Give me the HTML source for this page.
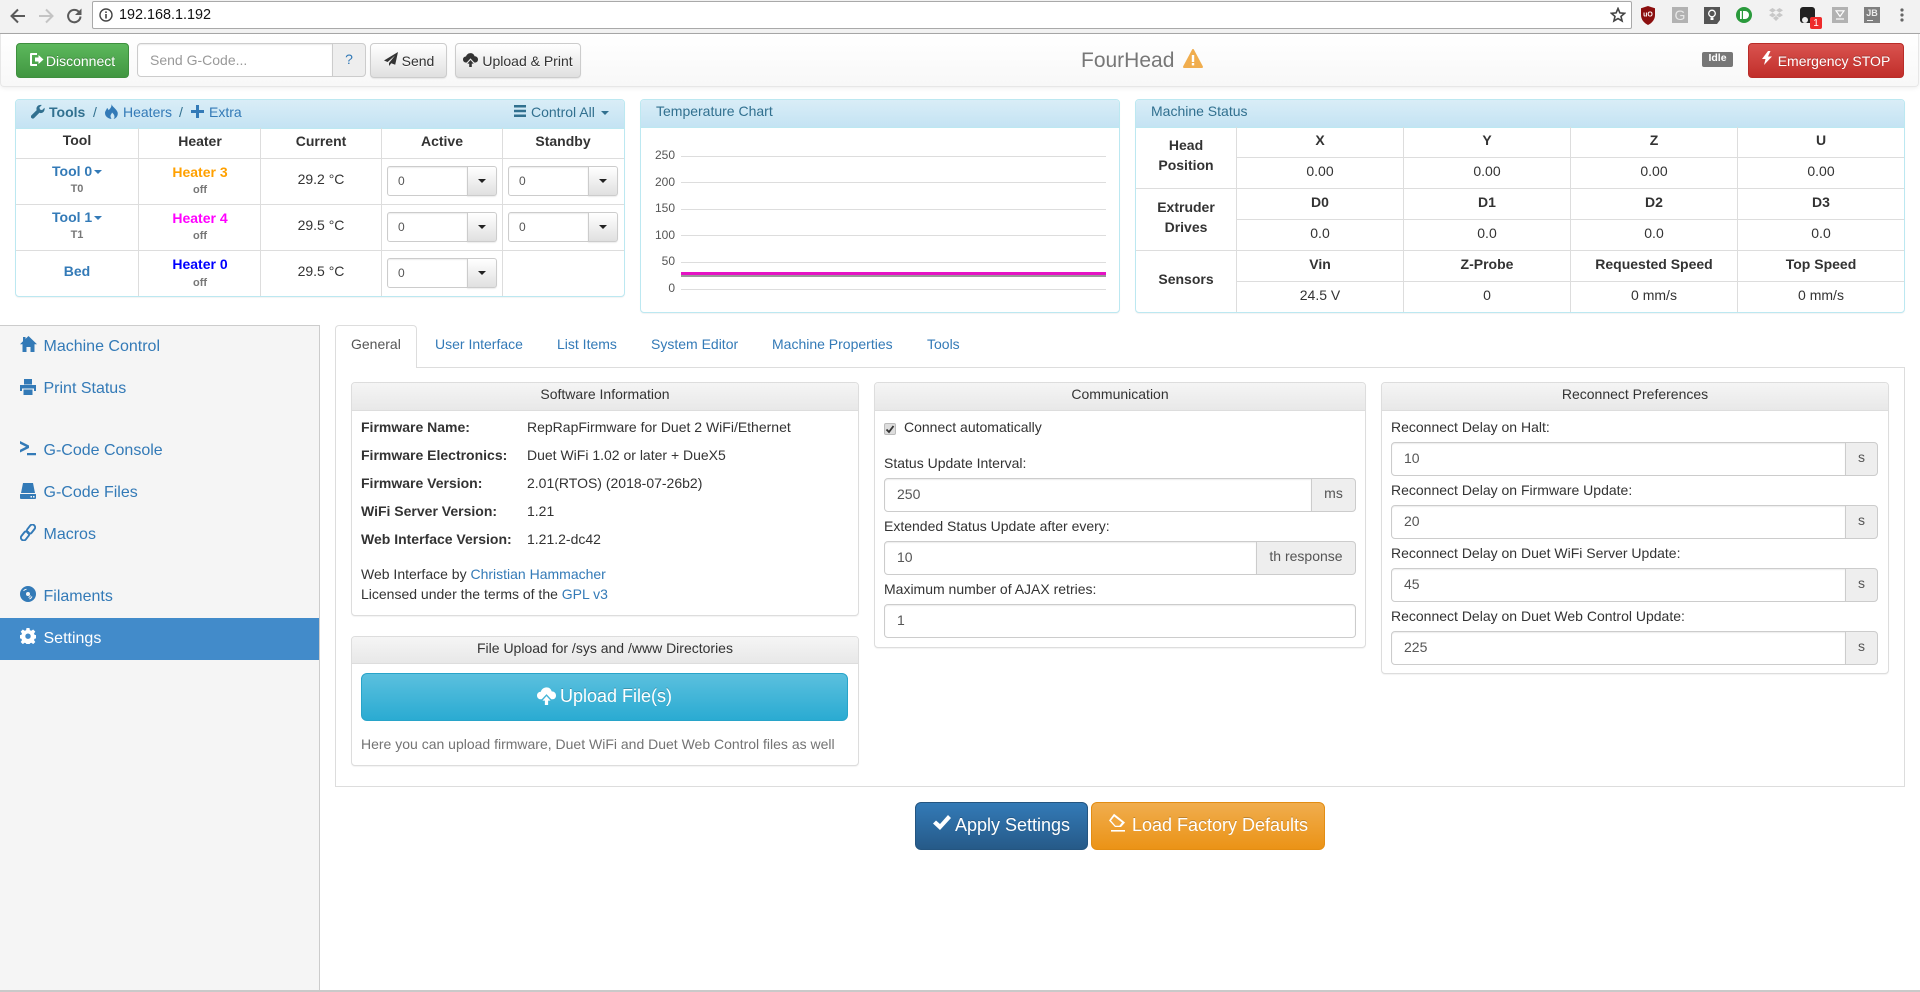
<!DOCTYPE html>
<html><head><meta charset="utf-8"><title>FourHead</title>
<style>
*{box-sizing:border-box}
html,body{margin:0;padding:0;width:1920px;height:992px;overflow:hidden;background:#fff;font:14px/20px "Liberation Sans",sans-serif;color:#333}
.a{position:absolute}
.t{position:absolute;white-space:nowrap;line-height:20px}
.c{transform:translateX(-50%)}
.b{font-weight:bold}
a,.l{color:#337ab7;text-decoration:none}
svg{position:absolute;display:block}
.btn{position:absolute;border:1px solid #ccc;border-radius:4px;white-space:nowrap;line-height:20px;text-align:center}
.def{background:linear-gradient(#fff,#e0e0e0);border-color:#ccc;text-shadow:0 1px 0 #fff;box-shadow:inset 0 1px 0 rgba(255,255,255,.15),0 1px 1px rgba(0,0,0,.075)}
.panel{position:absolute;background:#fff;border:1px solid #ddd;border-radius:4px;box-shadow:0 1px 1px rgba(0,0,0,.05)}
.ph{position:absolute;left:0;right:0;top:0;background:linear-gradient(#f5f5f5,#e8e8e8);border-bottom:1px solid #ddd;border-radius:3px 3px 0 0;text-align:center;height:27px;line-height:20px;padding-top:2px}
.info{border-color:#bce8f1}
.info .ph{background:linear-gradient(#d9edf7,#c4e3f3);border-bottom-color:#bce8f1;color:#31708f;text-align:left}
.h{position:absolute;height:1px;background:#ddd}
.v{position:absolute;width:1px;background:#ddd}
.inp{position:absolute;border:1px solid #ccc;border-radius:4px;background:#fff;color:#555;font:14px "Liberation Sans",sans-serif;padding:0 12px 2px;box-shadow:inset 0 1px 1px rgba(0,0,0,.075);outline:0}
.add{position:absolute;background:#eee;border:1px solid #ccc;border-left-width:1px;border-radius:0 4px 4px 0;color:#555;text-align:center;line-height:28px}
.sel{position:absolute;width:110px;height:30px}
.sel .f{position:absolute;left:0;top:0;width:81px;height:30px;border:1px solid #ccc;border-radius:3px 0 0 3px;background:#fff;color:#555;font-size:12px;line-height:28px;padding-left:10px;box-shadow:inset 0 1px 1px rgba(0,0,0,.075)}
.sel .g{position:absolute;left:80px;top:0;width:30px;height:30px;border:1px solid #ccc;border-radius:0 3px 3px 0;background:linear-gradient(#fff,#e0e0e0);box-shadow:0 1px 1px rgba(0,0,0,.075)}
.caret{position:absolute;width:0;height:0;border-left:4px solid transparent;border-right:4px solid transparent;border-top:4px solid currentColor}
.off{position:absolute;white-space:nowrap;font-size:11px;font-weight:bold;color:#777;line-height:14px;transform:translateX(-50%)}
.nav{position:absolute;left:43.5px;font-size:16px;line-height:22px;color:#337ab7;white-space:nowrap}
</style></head><body>

<!-- browser chrome -->
<div class="a" style="left:0;top:0;width:1920px;height:34px;background:#f2f2f2;border-bottom:1px solid #a9a9a9"></div>
<svg style="left:9px;top:7px" width="18" height="18" viewBox="0 0 18 18"><path d="M16 9H3M9 2.5 2.5 9 9 15.5" fill="none" stroke="#5a5a5a" stroke-width="2"/></svg>
<svg style="left:37px;top:7px" width="18" height="18" viewBox="0 0 18 18"><path d="M2 9h13M9 2.5 15.5 9 9 15.5" fill="none" stroke="#c4c4c4" stroke-width="2"/></svg>
<svg style="left:66px;top:7px" width="17" height="18" viewBox="0 0 17 18"><path d="M14.5 9.500a6.200 6.200 0 1 1-1.700-4.700" fill="none" stroke="#5a5a5a" stroke-width="2"/><path d="M15.500 1.500v6.500H9z" fill="#5a5a5a"/></svg>
<div class="a" style="left:92px;top:1px;width:1540px;height:28px;background:#fff;border:1px solid #a9a9a9;border-radius:2px"></div>
<svg style="left:99px;top:8px" width="14" height="14" viewBox="0 0 14 14"><circle cx="7" cy="7" r="6" fill="none" stroke="#444" stroke-width="1.400"/><rect x="6.200" y="6" width="1.600" height="4.500" fill="#444"/><rect x="6.200" y="3.400" width="1.600" height="1.600" fill="#444"/></svg>
<div class="t" style="left:119px;top:5px;font-size:14.400px;color:#111">192.168.1.192</div>
<svg style="left:1610px;top:7px" width="16" height="16" viewBox="0 0 16 16"><path d="M8 1.500l1.900 4.400 4.700.4-3.600 3.100 1.100 4.600L8 11.600l-4.100 2.400L5 9.400 1.400 6.300l4.700-.4z" fill="none" stroke="#444" stroke-width="1.600"/></svg>
<svg style="left:1640px;top:6px" width="16" height="19" viewBox="0 0 16 19"><path d="M8 0l7 2.300V9c0 4.500-3 8-7 10-4-2-7-5.500-7-10V2.300z" fill="#8b0f0f"/><text x="8" y="10.500" font-size="7" font-weight="bold" text-anchor="middle" fill="#fff" font-family="Liberation Sans">uO</text></svg>
<div class="a" style="left:1672px;top:7px;width:16px;height:16px;background:#b2b2b2;color:#e8e8e8;font-size:14px;line-height:16px;text-align:center">G</div>
<svg style="left:1704px;top:7px" width="16" height="17" viewBox="0 0 16 17"><path d="M0 0h16v13l-3 4H0z" fill="#555"/><circle cx="8" cy="6.500" r="3.300" fill="none" stroke="#fff" stroke-width="1.300"/><path d="M6.500 10.500h3v2.500h-3z" fill="#fff"/></svg>
<svg style="left:1736px;top:7px" width="16" height="16" viewBox="0 0 16 16"><circle cx="8" cy="8" r="8" fill="#2a9a3c"/><rect x="4" y="4" width="1.800" height="8" fill="#fff"/><path d="M7 4h2a4 4 0 0 1 0 8H7z" fill="#fff"/></svg>
<svg style="left:1769px;top:8px" width="14" height="14" viewBox="0 0 14 14" fill="#c8c8c8"><path d="M3.500 0 7 2.300 3.500 4.600 0 2.300zM10.500 0 14 2.300 10.500 4.600 7 2.300zM3.500 4.800 7 7.100 3.500 9.400 0 7.100zM10.500 4.800 14 7.100 10.500 9.400 7 7.100zM7 8l3 2-3 3-3-3z"/></svg>
<div class="a" style="left:1800px;top:7px;width:15px;height:16px;background:#222;border-radius:3px"></div>
<div class="a" style="left:1802px;top:17px;width:6px;height:6px;background:#eee;border-radius:50%"></div>
<div class="a" style="left:1810px;top:17px;width:12px;height:12px;background:#ee2a2a;border-radius:2px;color:#fff;font-size:10px;line-height:13px;text-align:center">1</div>
<div class="a" style="left:1832px;top:7px;width:16px;height:16px;background:#b2b2b2"></div>
<svg style="left:1835px;top:10px" width="10" height="10" viewBox="0 0 10 10"><path d="M1 .8h8L5 6.500z" fill="none" stroke="#fff" stroke-width="1.200"/><path d="M1 9h8" stroke="#fff" stroke-width="1.200"/></svg>
<div class="a" style="left:1864px;top:7px;width:16px;height:16px;background:#7f7f7f;color:#ececec;font-size:9px;font-weight:bold;line-height:12px;text-align:center">JB</div>
<div class="a" style="left:1867px;top:20px;width:6px;height:1px;background:#eee"></div>
<svg style="left:1900px;top:8px" width="4" height="14" viewBox="0 0 4 14" fill="#666"><circle cx="2" cy="2" r="1.600"/><circle cx="2" cy="7" r="1.600"/><circle cx="2" cy="12" r="1.600"/></svg>

<!-- navbar -->
<div class="a" style="left:0;top:34px;width:1919px;height:53px;background:linear-gradient(#fff,#f8f8f8);border:1px solid #e7e7e7;border-top:0;border-radius:0 0 4px 4px;box-shadow:0 1px 5px rgba(0,0,0,.075)"></div>
<div class="btn" style="left:16px;top:43px;width:113px;height:35px;background:linear-gradient(#5cb85c,#419641);border-color:#3e8f3e;color:#fff;padding:7px 0 0 16px;text-shadow:0 -1px 0 rgba(0,0,0,.2)">Disconnect</div>
<svg style="left:29px;top:52px" width="15" height="15" viewBox="0 0 15 15" fill="#fff"><path d="M2 1h6v2H3.500C3 3 3 3.200 3 3.500v8c0 .3 0 .5.5.5H8v2H2a1 1 0 0 1-1-1V2a1 1 0 0 1 1-1z"/><path d="M6 5.500h3.500V3L14.500 7.500 9.500 12V9.500H6z"/></svg>
<div class="inp" style="left:137px;top:43px;width:196px;height:34px;color:#999;line-height:32px;border-radius:4px 0 0 4px">Send G-Code...</div>
<div class="add l" style="left:332px;top:43px;width:34px;height:34px;line-height:30px;border-left:1px solid #ccc"><span style="color:#337ab7">?</span></div>
<div class="btn def" style="left:370px;top:43px;width:77px;height:35px;padding:7px 0 0 19px">Send</div>
<svg style="left:384px;top:52px" width="14" height="14" viewBox="0 0 14 14" fill="#333"><path d="M14 0 0 8.500l3.600 1.500L11 3.500 5 11v3l2.300-2.700 3.900 1.500z"/></svg>
<div class="btn def" style="left:455px;top:43px;width:126px;height:35px;padding:7px 0 0 19px">Upload &amp; Print</div>
<svg style="left:463px;top:52px" width="15" height="15" viewBox="0 0 14 14" fill="#333"><path d="M7 1c2 0 3.400 1.200 3.800 3 1.800 0 3.200 1.200 3.200 3s-1.200 2.800-2.600 2.800H10.500L7 6 3.500 9.800H2.600C1.200 9.800 0 8.600 0 7s1.200-2.800 2.800-2.800C3.300 2.300 5 1 7 1zM7 7.500l3 3.300H8.200V14H5.800v-3.200H4z"/></svg>
<div class="t" style="left:1081px;top:49px;font-size:21px;line-height:24px;color:#777">FourHead</div>
<svg style="left:1183px;top:49px" width="20" height="19" viewBox="0 0 20 19"><path d="M10 0c.5 0 .8.300 1 .7l8.800 16.500c.4.800 0 1.800-1 1.800H1.200c-1 0-1.400-1-1-1.800L9 .7c.2-.4.500-.7 1-.7z" fill="#f0ad4e"/><rect x="8.800" y="6" width="2.400" height="7" fill="#fff"/><rect x="8.800" y="14" width="2.400" height="2.400" fill="#fff"/></svg>
<div class="a b" style="left:1702px;top:52px;width:31px;height:15px;background:#777;border-radius:2px;color:#fff;font-size:10.500px;line-height:13px;text-align:center">Idle</div>
<div class="btn" style="left:1748px;top:43px;width:156px;height:35px;background:linear-gradient(#d9534f,#c12e2a);border-color:#b92c28;color:#fff;padding:7px 0 0 16px;text-shadow:0 -1px 0 rgba(0,0,0,.2)">Emergency STOP</div>
<svg style="left:1762px;top:51px" width="10" height="14" viewBox="0 0 10 14" fill="#fff"><path d="M6 0 0 8h3.500L2 14l8-8.500H6L8.500 0z"/></svg>

<!-- tools panel -->
<div class="panel info" style="left:15px;top:99px;width:610px;height:198px">
 <div class="ph" style="height:29px;padding-top:3px"></div>
</div>
<div class="h" style="left:16px;top:158px;width:608px"></div>
<div class="h" style="left:16px;top:204px;width:608px"></div>
<div class="h" style="left:16px;top:250px;width:608px"></div>
<div class="v" style="left:138px;top:128px;height:168px"></div>
<div class="v" style="left:260px;top:128px;height:168px"></div>
<div class="v" style="left:381px;top:128px;height:168px"></div>
<div class="v" style="left:502px;top:128px;height:168px"></div>
<svg style="left:31px;top:104px" width="14" height="15" viewBox="0 0 14 14" fill="#31708f"><path d="M13.500 3.200 11 5.600 9 5 8.400 3l2.400-2.500C9 .1 7.300.6 6.400 1.700c-1 1.100-1.200 2.600-.7 3.900L.5 10.800a1.900 1.900 0 0 0 2.700 2.700l5.200-5.200c1.300.5 2.800.3 3.900-.7 1.100-1 1.600-2.700 1.200-4.400z"/></svg>
<div class="t b" style="left:49px;top:102px;color:#31708f">Tools</div>
<div class="t" style="left:93px;top:102px;color:#31708f">/</div>
<svg style="left:105px;top:104px" width="13" height="15" viewBox="0 0 13 15" fill="#337ab7"><path d="M6.500 0c.5 2.500 4.500 4.500 6 8 1 3-1 6.500-4 7 1.500-1.500 1.500-4-1.500-6.500-.3 1.500-1.500 2-1.500 3.500 0 1 .5 2 1 3C3 14.500 0 12.500 0 9c0-2 1.500-3 2-5 .8.500 1.300 1.200 1.500 2.300C5 5 6.800 3 6.500 0z"/></svg>
<div class="t l" style="left:123px;top:102px">Heaters</div>
<div class="t" style="left:179px;top:102px;color:#31708f">/</div>
<svg style="left:191px;top:105px" width="13" height="13" viewBox="0 0 13 13" fill="#337ab7"><path d="M5 0h3v5h5v3H8v5H5V8H0V5h5z"/></svg>
<div class="t l" style="left:209px;top:102px">Extra</div>
<svg style="left:514px;top:105px" width="12" height="12" viewBox="0 0 12 12" fill="#31708f"><path d="M0 0h12v2.500H0zM0 4.700h12v2.500H0zM0 9.500h12V12H0z"/></svg>
<div class="t" style="left:531px;top:102px;color:#31708f">Control All</div>
<div class="caret" style="left:601px;top:111px;color:#31708f"></div>

<div class="t b c" style="left:77px;top:130px">Tool</div>
<div class="t b c" style="left:200px;top:131px">Heater</div>
<div class="t b c" style="left:321px;top:131px">Current</div>
<div class="t b c" style="left:442px;top:131px">Active</div>
<div class="t b c" style="left:563px;top:131px">Standby</div>

<div class="t b l" style="left:52px;top:161px">Tool 0</div><div class="caret" style="left:94px;top:170px;color:#337ab7"></div>
<div class="off" style="left:77px;top:182px">T0</div>
<div class="t b c" style="left:200px;top:162px;color:#ffa000">Heater 3</div>
<div class="off" style="left:200px;top:183px">off</div>
<div class="t c" style="left:321px;top:169px">29.2 °C</div>
<div class="sel" style="left:387px;top:166px"><div class="f">0</div><div class="g"><div class="caret" style="left:10px;top:12px;color:#222"></div></div></div>
<div class="sel" style="left:508px;top:166px"><div class="f">0</div><div class="g"><div class="caret" style="left:10px;top:12px;color:#222"></div></div></div>

<div class="t b l" style="left:52px;top:207px">Tool 1</div><div class="caret" style="left:94px;top:216px;color:#337ab7"></div>
<div class="off" style="left:77px;top:228px">T1</div>
<div class="t b c" style="left:200px;top:208px;color:#f0f">Heater 4</div>
<div class="off" style="left:200px;top:229px">off</div>
<div class="t c" style="left:321px;top:215px">29.5 °C</div>
<div class="sel" style="left:387px;top:212px"><div class="f">0</div><div class="g"><div class="caret" style="left:10px;top:12px;color:#222"></div></div></div>
<div class="sel" style="left:508px;top:212px"><div class="f">0</div><div class="g"><div class="caret" style="left:10px;top:12px;color:#222"></div></div></div>

<div class="t b l c" style="left:77px;top:261px">Bed</div>
<div class="t b c" style="left:200px;top:254px;color:#00f">Heater 0</div>
<div class="off" style="left:200px;top:276px">off</div>
<div class="t c" style="left:321px;top:261px">29.5 °C</div>
<div class="sel" style="left:387px;top:258px"><div class="f">0</div><div class="g"><div class="caret" style="left:10px;top:12px;color:#222"></div></div></div>

<!-- chart -->
<div class="panel info" style="left:640px;top:99px;width:480px;height:214px"><div class="ph" style="height:28px;padding:1px 0 0 15px">Temperature Chart</div></div>
<svg style="left:640px;top:127px" width="480" height="185" viewBox="640 127 480 185">
 <g stroke="#ddd" stroke-width="1"><path d="M681 156.500h425M681 182.500h425M681 209.500h425M681 235.500h425M681 262.500h425M681 289.500h425"/></g>
 <rect x="681" y="275" width="425" height="2" fill="#999"/>
 <rect x="681" y="272" width="425" height="3" fill="#e512c4"/>
 <g font-family="Liberation Sans" font-size="12" fill="#555" text-anchor="end"><text x="675" y="159">250</text><text x="675" y="186">200</text><text x="675" y="212">150</text><text x="675" y="239">100</text><text x="675" y="265">50</text><text x="675" y="292">0</text></g>
</svg>

<!-- machine status -->
<div class="panel info" style="left:1135px;top:99px;width:770px;height:214px">
 <div class="ph" style="height:28px;padding:1px 0 0 15px">Machine Status</div>
</div>
<div class="h" style="left:1237px;top:157px;width:667px"></div>
<div class="h" style="left:1136px;top:188px;width:768px"></div>
<div class="h" style="left:1237px;top:219px;width:667px"></div>
<div class="h" style="left:1136px;top:250px;width:768px"></div>
<div class="h" style="left:1237px;top:281px;width:667px"></div>
<div class="v" style="left:1236px;top:127px;height:185px"></div>
<div class="v" style="left:1403px;top:127px;height:185px"></div>
<div class="v" style="left:1570px;top:127px;height:185px"></div>
<div class="v" style="left:1737px;top:127px;height:185px"></div>
<div class="t b c" style="left:1186px;top:135px">Head</div>
<div class="t b c" style="left:1186px;top:155px">Position</div>
<div class="t b c" style="left:1186px;top:197px">Extruder</div>
<div class="t b c" style="left:1186px;top:217px">Drives</div>
<div class="t b c" style="left:1186px;top:269px">Sensors</div>
<div class="t b c" style="left:1320px;top:130px">X</div><div class="t b c" style="left:1487px;top:130px">Y</div><div class="t b c" style="left:1654px;top:130px">Z</div><div class="t b c" style="left:1821px;top:130px">U</div>
<div class="t c" style="left:1320px;top:161px">0.00</div><div class="t c" style="left:1487px;top:161px">0.00</div><div class="t c" style="left:1654px;top:161px">0.00</div><div class="t c" style="left:1821px;top:161px">0.00</div>
<div class="t b c" style="left:1320px;top:192px">D0</div><div class="t b c" style="left:1487px;top:192px">D1</div><div class="t b c" style="left:1654px;top:192px">D2</div><div class="t b c" style="left:1821px;top:192px">D3</div>
<div class="t c" style="left:1320px;top:223px">0.0</div><div class="t c" style="left:1487px;top:223px">0.0</div><div class="t c" style="left:1654px;top:223px">0.0</div><div class="t c" style="left:1821px;top:223px">0.0</div>
<div class="t b c" style="left:1320px;top:254px">Vin</div><div class="t b c" style="left:1487px;top:254px">Z-Probe</div><div class="t b c" style="left:1654px;top:254px">Requested Speed</div><div class="t b c" style="left:1821px;top:254px">Top Speed</div>
<div class="t c" style="left:1320px;top:285px">24.5 V</div><div class="t c" style="left:1487px;top:285px">0</div><div class="t c" style="left:1654px;top:285px">0 mm/s</div><div class="t c" style="left:1821px;top:285px">0 mm/s</div>

<!-- sidebar -->
<div class="a" style="left:0;top:325px;width:320px;height:666px;background:#f5f5f5;border:1px solid #ccc;border-left:0;border-bottom:0"></div>
<div class="a" style="left:0;top:990px;width:1920px;height:2px;background:#c9c9c9"></div>
<div class="a" style="left:0;top:618px;width:319px;height:42px;background:#428bca"></div>
<svg style="left:20px;top:336px" width="17" height="16" viewBox="0 0 17 16" fill="#337ab7"><path d="M8.500 0 17 8.200h-2.500V16H10.500v-5h-4v5H2.500V8.200H0L3 5.300V1h2.500v1.900z"/></svg>
<div class="nav" style="top:336px">Machine Control</div>
<svg style="left:20px;top:379px" width="16" height="16" viewBox="0 0 16 16" fill="#337ab7"><path d="M4 0h8v5.500H4zM0 6h16v6h-2V9.500H2V12H0zM3.500 10.500h9V16h-9z"/></svg>
<div class="nav" style="top:378px">Print Status</div>
<svg style="left:20px;top:441px" width="16" height="15" viewBox="0 0 16 15" fill="#337ab7"><path d="M0 0l9 4.500v2.500L0 11.500V8.800L6 5.700 0 2.800zM7 12h9v2.200H7z"/></svg>
<div class="nav" style="top:440px">G-Code Console</div>
<svg style="left:20px;top:483px" width="16" height="16" viewBox="0 0 16 16" fill="#337ab7"><path d="M3 0h10l2 10H1zM.5 11h15a.5.5 0 0 1 .5.5V15a1 1 0 0 1-1 1H1a1 1 0 0 1-1-1v-3.500a.5.500 0 0 1 .5-.5z"/><rect x="10.500" y="13" width="1.500" height="1.500" fill="#f5f5f5"/><rect x="13" y="13" width="1.500" height="1.500" fill="#f5f5f5"/></svg>
<div class="nav" style="top:482px">G-Code Files</div>
<svg style="left:20px;top:524px" width="16" height="17" viewBox="0 0 16 17" fill="none" stroke="#337ab7" stroke-width="1.900"><g transform="rotate(-52 8 8.500)"><rect x="-1.500" y="5.500" width="10" height="5.500" rx="2.700"/><rect x="7.500" y="6" width="10" height="5.500" rx="2.700"/></g></svg>
<div class="nav" style="top:524px">Macros</div>
<svg style="left:20px;top:586px" width="16" height="16" viewBox="0 0 16 16"><circle cx="8" cy="8" r="8" fill="#337ab7"/><circle cx="8" cy="8" r="2" fill="#f5f5f5"/><path d="M10.500 9.500a3.500 3.500 0 0 1-2 2M12 10.500a5 5 0 0 1-2.500 2.500" stroke="#f5f5f5" stroke-width="1" fill="none"/><path d="M3.500 4.800a5 5 0 0 1 3-1.500" stroke="#f5f5f5" stroke-width="1" fill="none"/></svg>
<div class="nav" style="top:586px">Filaments</div>
<svg style="left:20px;top:628px" width="16" height="16" viewBox="0 0 16 16" fill="#fff"><path fill-rule="evenodd" d="M6.500 0h3l.4 2.200 1.400.6L13.200 1.500l2.100 2.100-1.300 1.900.6 1.400 2.100.4v3l-2.100.4-.6 1.400 1.300 1.900-2.100 2.100-1.900-1.300-1.400.6-.4 2.100h-3l-.4-2.100-1.400-.6-1.900 1.300L.700 14 2 12.100l-.6-1.400L-.7 10.300V7.300l2.100-.4.600-1.400L.700 3.600 2.800 1.500l1.900 1.300 1.400-.6zM8 5.500a2.700 2.700 0 1 0 0 5.400 2.700 2.700 0 0 0 0-5.400z"/></svg>
<div class="nav" style="top:628px;color:#fff">Settings</div>

<!-- tabs -->
<div class="a" style="left:335px;top:367px;width:1570px;height:420px;border:1px solid #ddd;background:#fff"></div>
<div class="a" style="left:335px;top:325px;width:82px;height:43px;background:#fff;border:1px solid #ddd;border-bottom:0;border-radius:4px 4px 0 0"></div>
<div class="t" style="left:351px;top:334px;color:#555">General</div>
<div class="t l" style="left:435px;top:334px">User Interface</div>
<div class="t l" style="left:557px;top:334px">List Items</div>
<div class="t l" style="left:651px;top:334px">System Editor</div>
<div class="t l" style="left:772px;top:334px">Machine Properties</div>
<div class="t l" style="left:927px;top:334px">Tools</div>

<!-- software info -->
<div class="panel" style="left:351px;top:382px;width:508px;height:234px"><div class="ph" style="height:28px;padding-top:1px">Software Information</div></div>
<div class="t b" style="left:361px;top:417px">Firmware Name:</div><div class="t" style="left:527px;top:417px">RepRapFirmware for Duet 2 WiFi/Ethernet</div>
<div class="t b" style="left:361px;top:445px">Firmware Electronics:</div><div class="t" style="left:527px;top:445px">Duet WiFi 1.02 or later + DueX5</div>
<div class="t b" style="left:361px;top:473px">Firmware Version:</div><div class="t" style="left:527px;top:473px">2.01(RTOS) (2018-07-26b2)</div>
<div class="t b" style="left:361px;top:501px">WiFi Server Version:</div><div class="t" style="left:527px;top:501px">1.21</div>
<div class="t b" style="left:361px;top:529px">Web Interface Version:</div><div class="t" style="left:527px;top:529px">1.21.2-dc42</div>
<div class="t" style="left:361px;top:564px">Web Interface by <a>Christian Hammacher</a></div>
<div class="t" style="left:361px;top:584px">Licensed under the terms of the <a>GPL v3</a></div>

<!-- upload -->
<div class="panel" style="left:351px;top:636px;width:508px;height:130px"><div class="ph" style="height:27px;padding-top:1px">File Upload for /sys and /www Directories</div></div>
<div class="btn" style="left:361px;top:673px;width:487px;height:48px;background:linear-gradient(#5bc0de,#2aabd2);border-color:#28a4c9;color:#fff;font-size:18px;line-height:24px;padding:10px 0 0 23px;border-radius:6px;text-shadow:0 -1px 0 rgba(0,0,0,.2)">Upload File(s)</div>
<svg style="left:537px;top:686px" width="19" height="19" viewBox="0 0 14 14" fill="#fff"><path d="M7 1c2 0 3.400 1.200 3.800 3 1.800 0 3.200 1.200 3.200 3s-1.200 2.800-2.600 2.800H10.500L7 6 3.500 9.800H2.600C1.200 9.800 0 8.600 0 7s1.200-2.800 2.800-2.800C3.300 2.300 5 1 7 1zM7 7.500l3 3.300H8.200V14H5.800v-3.200H4z"/></svg>
<div class="t" style="left:361px;top:734px;color:#737373">Here you can upload firmware, Duet WiFi and Duet Web Control files as well</div>

<!-- communication -->
<div class="panel" style="left:874px;top:382px;width:492px;height:266px"><div class="ph" style="height:28px;padding-top:1px">Communication</div></div>
<div class="a" style="left:884px;top:423px;width:12px;height:12px;background:#ddd;border:1px solid #bbb;border-radius:2px"></div>
<svg style="left:885px;top:424px" width="10" height="10" viewBox="0 0 10 10"><path d="M1.500 5.500 4 8 8.500 2" fill="none" stroke="#333" stroke-width="1.800"/></svg>
<div class="t" style="left:904px;top:417px">Connect automatically</div>
<div class="t" style="left:884px;top:453px">Status Update Interval:</div>
<input class="inp" value="250" style="left:884px;top:478px;width:428px;height:34px;border-radius:4px 0 0 4px">
<div class="add" style="left:1311px;top:478px;width:45px;height:34px">ms</div>
<div class="t" style="left:884px;top:516px">Extended Status Update after every:</div>
<input class="inp" value="10" style="left:884px;top:541px;width:373px;height:34px;border-radius:4px 0 0 4px">
<div class="add" style="left:1256px;top:541px;width:100px;height:34px">th response</div>
<div class="t" style="left:884px;top:579px">Maximum number of AJAX retries:</div>
<input class="inp" value="1" style="left:884px;top:604px;width:472px;height:34px">

<!-- reconnect -->
<div class="panel" style="left:1381px;top:382px;width:508px;height:292px"><div class="ph" style="height:28px;padding-top:1px">Reconnect Preferences</div></div>
<div class="t" style="left:1391px;top:417px">Reconnect Delay on Halt:</div>
<input class="inp" value="10" style="left:1391px;top:442px;width:455px;height:34px;border-radius:4px 0 0 4px">
<div class="add" style="left:1845px;top:442px;width:33px;height:34px">s</div>
<div class="t" style="left:1391px;top:480px">Reconnect Delay on Firmware Update:</div>
<input class="inp" value="20" style="left:1391px;top:505px;width:455px;height:34px;border-radius:4px 0 0 4px">
<div class="add" style="left:1845px;top:505px;width:33px;height:34px">s</div>
<div class="t" style="left:1391px;top:543px">Reconnect Delay on Duet WiFi Server Update:</div>
<input class="inp" value="45" style="left:1391px;top:568px;width:455px;height:34px;border-radius:4px 0 0 4px">
<div class="add" style="left:1845px;top:568px;width:33px;height:34px">s</div>
<div class="t" style="left:1391px;top:606px">Reconnect Delay on Duet Web Control Update:</div>
<input class="inp" value="225" style="left:1391px;top:631px;width:455px;height:34px;border-radius:4px 0 0 4px">
<div class="add" style="left:1845px;top:631px;width:33px;height:34px">s</div>

<!-- bottom buttons -->
<div class="btn" style="left:915px;top:802px;width:173px;height:48px;background:linear-gradient(#337ab7,#265a88);border-color:#245580;color:#fff;font-size:18px;line-height:24px;padding:10px 0 0 22px;border-radius:6px;text-shadow:0 -1px 0 rgba(0,0,0,.2)">Apply Settings</div>
<svg style="left:933px;top:815px" width="18" height="16" viewBox="0 0 18 16" fill="#fff"><path d="M15 0l3 3L7 15 0 8.500l3-3L7 9z"/></svg>
<div class="btn" style="left:1091px;top:802px;width:234px;height:48px;background:linear-gradient(#f0ad4e,#eb9316);border-color:#e38d13;color:#fff;font-size:18px;line-height:24px;padding:10px 0 0 24px;border-radius:6px;text-shadow:0 -1px 0 rgba(0,0,0,.2)">Load Factory Defaults</div>
<svg style="left:1108px;top:813px" width="18" height="19" viewBox="0 0 18 19"><path d="M6 .8 17 9.500 13 14H7L1 7.500z" fill="#fff"/><path d="M3 7.500 6.200 3.500 14 9.500l-2.600 3.200H7.500z" fill="#f0a63d"/><rect x="3" y="17" width="14" height="1.600" fill="#fff"/></svg>
</body></html>
